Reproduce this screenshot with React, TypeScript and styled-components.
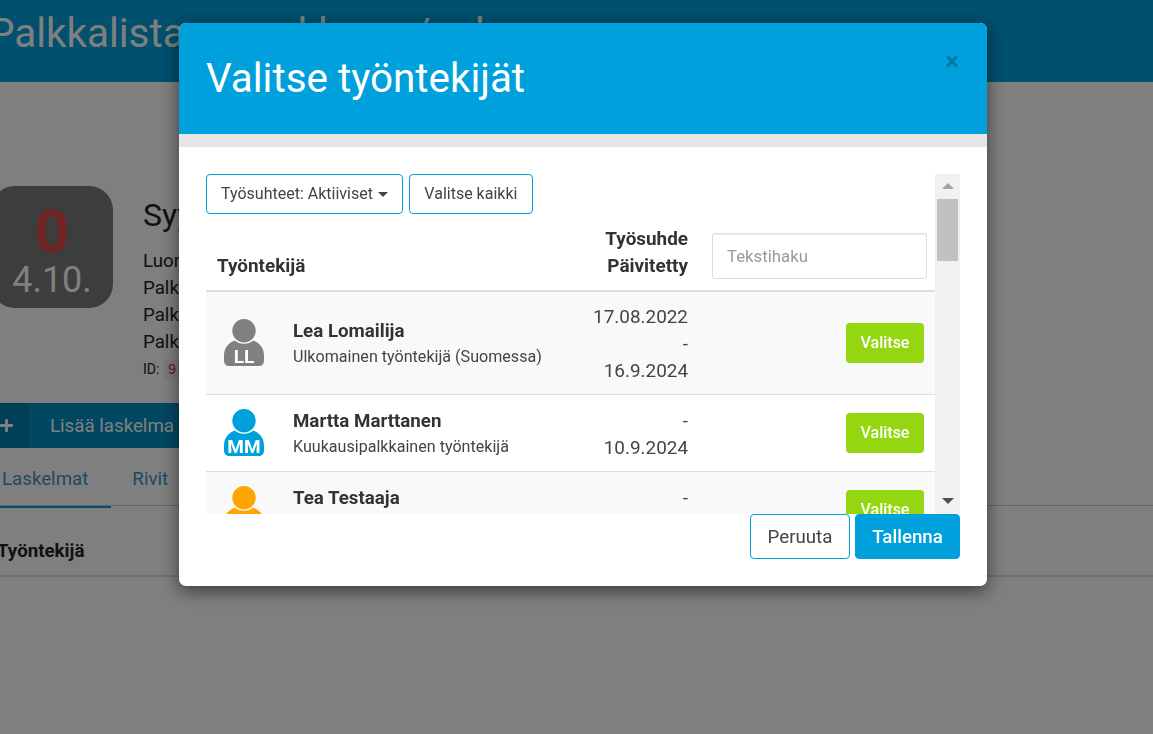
import React from 'react'
import styled, { createGlobalStyle } from 'styled-components'
import { FaPlus } from 'react-icons/fa'

const BLUE = '#00a0dc'

const GlobalStyle = createGlobalStyle`
  html, body {
    margin: 0;
    height: 100%;
    overflow: hidden;
    background: #fff;
    font-family: Roboto, "Liberation Sans", sans-serif;
    color: #333;
  }
  * { box-sizing: border-box; }
`

const employees = [
  {
    name: 'Lea Lomailija',
    role: 'Ulkomainen työntekijä (Suomessa)',
    dates: ['17.08.2022', '-', '16.9.2024'],
    initials: 'LL',
    color: '#808080',
  },
  {
    name: 'Martta Marttanen',
    role: 'Kuukausipalkkainen työntekijä',
    dates: ['-', '10.9.2024'],
    initials: 'MM',
    color: BLUE,
  },
  {
    name: 'Tea Testaaja',
    role: 'Tuntipalkkainen työntekijä',
    dates: ['-', '9.9.2024'],
    initials: 'TT',
    color: '#ffa500',
  },
]

const Avatar = ({ initials, color, gap }: { initials: string; color: string; gap: string }) => (
  <S.AvatarSvg viewBox="0 0 40 48" width="40" height="48">
    <path
      fill={color}
      d="M0 37 C0 29 4 24 11 21.5 C15 25 25 25 29 21.5 C36 24 40 29 40 37 L40 41 C40 45 38 47 34 47 L6 47 C2 47 0 45 0 41 Z"
    />
    <circle cx="20" cy="11.7" r="12.4" fill={color} stroke={gap} strokeWidth="1.4" />
    <S.AvatarText x="20" y="43.5" textAnchor="middle">
      {initials}
    </S.AvatarText>
  </S.AvatarSvg>
)

const App = () => {
  return (
    <>
      <GlobalStyle />
      <S.Page>
        <S.TopBar>
          <S.PageTitle>Palkkalistan muokkaus / rahaa</S.PageTitle>
        </S.TopBar>

        <S.Summary>
          <S.Tile>
            <S.TileCount>0</S.TileCount>
            <S.TileDate>4.10.</S.TileDate>
          </S.Tile>
          <S.SummaryInfo>
            <S.SummaryTitle>Syyskuu</S.SummaryTitle>
            <S.SummaryLine>Luonut</S.SummaryLine>
            <S.SummaryLine>Palkkapäivä</S.SummaryLine>
            <S.SummaryLine>Palkkakausi</S.SummaryLine>
            <S.SummaryLine>Palkkoja</S.SummaryLine>
            <S.SummaryId>
              ID: <code>9</code>
            </S.SummaryId>
          </S.SummaryInfo>
        </S.Summary>

        <S.AddBar>
          <S.AddIcon>
            <FaPlus size={15} />
          </S.AddIcon>
          <S.AddLabel>Lisää laskelma</S.AddLabel>
        </S.AddBar>

        <S.Tabs>
          <S.Tab $active>Laskelmat</S.Tab>
          <S.Tab>Rivit</S.Tab>
        </S.Tabs>

        <S.BackTableHead>Työntekijä</S.BackTableHead>
      </S.Page>

      <S.Overlay>
        <S.Modal>
          <S.ModalHeader>
            <S.ModalTitle>Valitse työntekijät</S.ModalTitle>
            <S.Close>×</S.Close>
          </S.ModalHeader>
          <S.HeaderStrip />
          <S.ModalBody>
            <S.ScrollArea>
              <S.ScrollContent>
                <S.FilterRow>
                  <S.FilterButton>
                    Työsuhteet: Aktiiviset <S.Caret />
                  </S.FilterButton>
                  <S.FilterButton>Valitse kaikki</S.FilterButton>
                </S.FilterRow>

                <S.TableHead>
                  <S.HeadName>Työntekijä</S.HeadName>
                  <S.HeadDates>
                    Työsuhde
                    <br />
                    Päivitetty
                  </S.HeadDates>
                  <S.Search placeholder="Tekstihaku" />
                </S.TableHead>

                {employees.map((e, i) => (
                  <S.Row key={e.name} $striped={i % 2 === 0}>
                    <Avatar initials={e.initials} color={e.color} gap={i % 2 === 0 ? '#f9f9f9' : '#fff'} />
                    <S.Person>
                      <S.PersonName>{e.name}</S.PersonName>
                      <S.PersonRole>{e.role}</S.PersonRole>
                    </S.Person>
                    <S.Dates>
                      {e.dates.map((d, j) => (
                        <div key={j}>{d}</div>
                      ))}
                    </S.Dates>
                    <S.PickButton>Valitse</S.PickButton>
                  </S.Row>
                ))}
              </S.ScrollContent>
              <S.ScrollBar>
                <S.ArrowUp />
                <S.Thumb />
                <S.ArrowDown />
              </S.ScrollBar>
            </S.ScrollArea>

            <S.Footer>
              <S.CancelButton>Peruuta</S.CancelButton>
              <S.SaveButton>Tallenna</S.SaveButton>
            </S.Footer>
          </S.ModalBody>
        </S.Modal>
      </S.Overlay>
    </>
  )
}

const S = {
  Page: styled.div`
    margin-left: -9px;
    width: 1162px;
    height: 734px;
    overflow: hidden;
  `,
  TopBar: styled.div`
    height: 82px;
    background: ${BLUE};
    padding-top: 10px;
  `,
  PageTitle: styled.h1`
    margin: 0 0 0 -2px;
    font-size: 40.4px;
    line-height: 48px;
    font-weight: 400;
    color: #fff;
    white-space: nowrap;
  `,
  Summary: styled.div`
    display: flex;
    gap: 30px;
    margin-top: 104px;
    height: 217px;
  `,
  Tile: styled.div`
    width: 122px;
    height: 122px;
    border-radius: 24px;
    background: #7a7a7a;
    display: flex;
    flex-direction: column;
    align-items: center;
    padding-top: 16px;
  `,
  TileCount: styled.div`
    font-size: 60px;
    line-height: 60px;
    font-weight: 700;
    color: #e64646;
  `,
  TileDate: styled.div`
    font-size: 36px;
    line-height: 37px;
    color: #fff;
  `,
  SummaryInfo: styled.div`
    color: #222;
  `,
  SummaryTitle: styled.div`
    font-size: 32px;
    line-height: 40px;
    margin: 9px 0 13px;
  `,
  SummaryLine: styled.div`
    font-size: 18.72px;
    line-height: 27px;
  `,
  SummaryId: styled.div`
    font-size: 14px;
    line-height: 20px;
    margin-top: 3px;
    code {
      font-family: "Liberation Mono", monospace;
      color: #c7254e;
      background: #f9f2f4;
      margin-left: 1px;
      padding: 2px 4px;
    }
  `,
  AddBar: styled.div`
    display: flex;
    align-items: center;
    height: 45px;
    width: 240px;
    background: #0090c4;
    color: #fff;
  `,
  AddIcon: styled.div`
    width: 38px;
    height: 45px;
    background: #0080ad;
    display: flex;
    align-items: center;
    padding-left: 8px;
  `,
  AddLabel: styled.div`
    margin-left: 21px;
    font-size: 18.72px;
    white-space: nowrap;
  `,
  Tabs: styled.div`
    display: flex;
    height: 58px;
    border-bottom: 1px solid #ccc;
  `,
  Tab: styled.div<{ $active?: boolean }>`
    padding: 19px 23px 0 21px;
    height: 60px;
    font-size: 18.72px;
    line-height: 24px;
    color: #3f93bf;
    border-bottom: 2px solid ${(p) => (p.$active ? BLUE : 'transparent')};
    &:first-child {
      margin-left: -10px;
    }
  `,
  BackTableHead: styled.div`
    height: 71px;
    padding: 33px 0 0 6px;
    font-size: 18.72px;
    line-height: 24px;
    font-weight: 700;
    color: #222;
    border-bottom: 2px solid #ddd;
  `,
  Overlay: styled.div`
    position: fixed;
    inset: 0;
    background: rgba(0, 0, 0, 0.5);
    padding: 23px 0 0 179px;
  `,
  Modal: styled.div`
    width: 808px;
    height: 563px;
    background: #fff;
    border-radius: 7px;
    box-shadow: 0 5px 18px rgba(0, 0, 0, 0.55);
    overflow: hidden;
  `,
  ModalHeader: styled.div`
    height: 111px;
    background: ${BLUE};
    display: flex;
    justify-content: space-between;
    padding: 32px 28px 0 27px;
  `,
  ModalTitle: styled.h2`
    margin: 0;
    font-size: 40.4px;
    line-height: 48px;
    font-weight: 400;
    color: #fff;
  `,
  Close: styled.div`
    font-size: 26px;
    line-height: 16px;
    font-weight: 700;
    margin-top: -2px;
    color: rgba(0, 0, 0, 0.25);
  `,
  HeaderStrip: styled.div`
    height: 13px;
    background: #e5e5e5;
  `,
  ModalBody: styled.div`
    padding: 27px 27px 0;
  `,
  ScrollArea: styled.div`
    display: flex;
    height: 340px;
  `,
  ScrollContent: styled.div`
    width: 729px;
    height: 340px;
    overflow: hidden;
  `,
  FilterRow: styled.div`
    display: flex;
    gap: 6px;
  `,
  FilterButton: styled.button`
    height: 40px;
    min-width: 124px;
    padding: 0 14px 1px;
    background: #fff;
    border: 1px solid ${BLUE};
    border-radius: 4px;
    font-family: inherit;
    font-size: 16px;
    color: #444;
    white-space: nowrap;
  `,
  Caret: styled.span`
    display: inline-block;
    width: 0;
    height: 0;
    margin-left: 1px;
    vertical-align: 2px;
    border-top: 5px solid #444;
    border-left: 5px solid transparent;
    border-right: 5px solid transparent;
  `,
  TableHead: styled.div`
    display: grid;
    grid-template-columns: 1fr 200px 215px;
    column-gap: 24px;
    align-items: end;
    height: 78px;
    padding-left: 11px;
    padding-right: 8px;
    border-bottom: 2px solid #ddd;
    font-size: 18.9px;
    font-weight: 700;
    line-height: 27px;
    color: #333;
  `,
  HeadName: styled.div`
    padding-bottom: 11px;
  `,
  HeadDates: styled.div`
    text-align: right;
    padding-bottom: 11px;
  `,
  Search: styled.input`
    height: 46px;
    margin-bottom: 11px;
    width: 215px;
    padding: 0 14px;
    border: 1px solid #ddd;
    border-radius: 3px;
    box-shadow: inset 0 1px 1px rgba(0, 0, 0, 0.075);
    font-family: inherit;
    font-size: 16.8px;
    outline: none;
    &::placeholder {
      color: #999;
    }
  `,
  Row: styled.div<{ $striped?: boolean }>`
    display: grid;
    grid-template-columns: 40px 1fr auto 78px;
    align-items: center;
    min-height: 77px;
    padding: 11px 11px 10px 18px;
    background: ${(p) => (p.$striped ? '#f9f9f9' : '#fff')};
    border-bottom: 1px solid #ddd;
  `,
  AvatarSvg: styled.svg`
    display: block;
    margin-top: -1px;
  `,
  AvatarText: styled.text`
    font-family: Roboto, "Liberation Sans", sans-serif;
    font-size: 19px;
    font-weight: 700;
    fill: #fff;
  `,
  Person: styled.div`
    padding-left: 29px;
  `,
  PersonName: styled.div`
    font-size: 18.72px;
    line-height: 25px;
    font-weight: 700;
    color: #333;
  `,
  PersonRole: styled.div`
    font-size: 16.1px;
    line-height: 25px;
    color: #444;
  `,
  Dates: styled.div`
    font-size: 18.9px;
    line-height: 27px;
    text-align: right;
    color: #444;
    margin-right: 158px;
  `,
  PickButton: styled.button`
    height: 40px;
    width: 78px;
    margin-top: -1px;
    padding: 0 0 2px;
    border: none;
    border-radius: 4px;
    background: #94d60f;
    color: #fff;
    font-family: inherit;
    font-size: 16px;
    font-weight: 500;
  `,
  ScrollBar: styled.div`
    width: 25px;
    height: 340px;
    background: #f1f1f1;
    display: flex;
    flex-direction: column;
    align-items: center;
    padding: 9px 0;
  `,
  ArrowUp: styled.div`
    width: 0;
    height: 0;
    border-left: 6px solid transparent;
    border-right: 6px solid transparent;
    border-bottom: 6px solid #a3a3a3;
  `,
  Thumb: styled.div`
    width: 21px;
    height: 62px;
    margin-top: 10px;
    background: #c1c1c1;
  `,
  ArrowDown: styled.div`
    width: 0;
    height: 0;
    margin-top: auto;
    margin-bottom: 1px;
    border-left: 6px solid transparent;
    border-right: 6px solid transparent;
    border-top: 6px solid #505050;
  `,
  Footer: styled.div`
    display: flex;
    justify-content: flex-end;
    gap: 5px;
  `,
  CancelButton: styled.button`
    width: 100px;
    height: 45px;
    background: #fff;
    border: 1px solid ${BLUE};
    border-radius: 4px;
    font-family: inherit;
    font-size: 18.72px;
    color: #444;
  `,
  SaveButton: styled.button`
    width: 105px;
    height: 45px;
    background: ${BLUE};
    border: 1px solid ${BLUE};
    border-radius: 4px;
    font-family: inherit;
    font-size: 18.72px;
    font-weight: 500;
    color: #fff;
  `,
}

export default App
